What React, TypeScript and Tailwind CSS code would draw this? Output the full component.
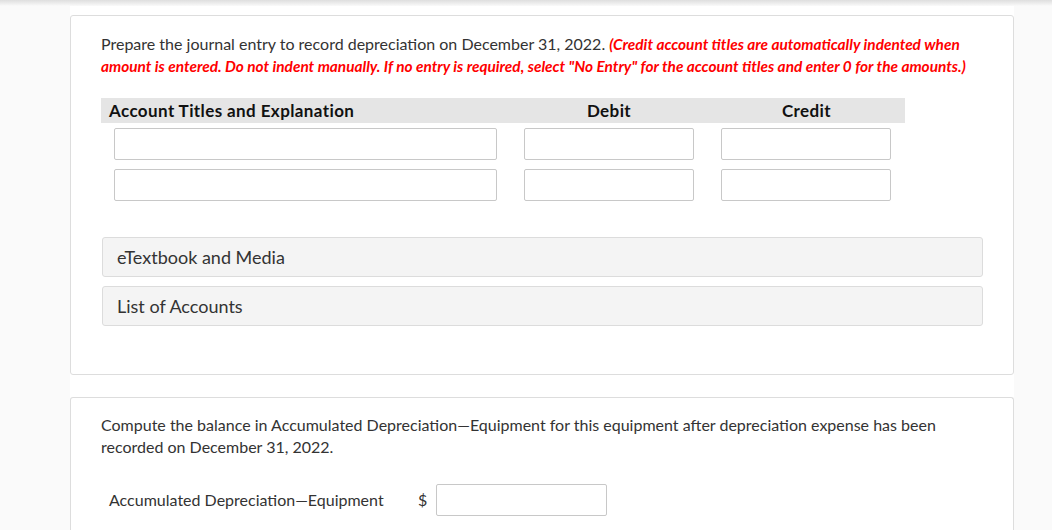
import React from "react";

const Field = ({ className = "" }: { className?: string }) => (
  <input
    type="text"
    className={`h-8 rounded-[2px] border border-[#c8c8c8] bg-white px-2 text-[15px] outline-none ${className}`}
  />
);

const Accordion = ({ label }: { label: string }) => (
  <div className="flex h-10 items-center rounded-[3px] border border-[#dcdcdc] bg-[#f4f4f4] px-[14px] text-[18px] text-[#333]">
    {label}
  </div>
);

const App: React.FC = () => {
  const rows = [0, 1];

  return (
    <div
      className="relative min-h-[530px] w-full bg-[#fafafa]"
      style={{ fontFamily: "Lato, 'Open Sans', sans-serif" }}
    >
      {/* top shadow strip */}
      <div className="absolute left-0 right-0 top-0 h-[6px] bg-gradient-to-b from-[#dedede] to-[#fafafa]" />

      <div className="ml-[70px] mr-[38px] flex flex-col gap-[22px] bg-white pt-[15px]">
        {/* Journal entry card */}
        <section className="h-[360px] rounded-[3px] border border-[#dddddd] bg-white px-[30px] pt-[17px]">
          <p className="text-[16px] leading-[22px] text-[#333]">
            Prepare the journal entry to record depreciation on December 31, 2022.{" "}
            <span className="text-[15.4px] font-bold italic text-[#ff0000]">
              (Credit account titles are automatically indented when amount is entered. Do not indent
              manually. If no entry is required, select "No Entry" for the account titles and enter 0 for
              the amounts.)
            </span>
          </p>

          <div className="mt-[21px] w-[804px]">
            <div className="grid h-[25px] grid-cols-[409px_198px_197px] items-center bg-[#e5e5e5] text-[17px] font-bold tracking-[0.4px] text-[#111]">
              <div className="pl-2">Account Titles and Explanation</div>
              <div className="text-center">Debit</div>
              <div className="text-center">Credit</div>
            </div>
            <div className="mt-[5px] flex flex-col gap-[9px]">
              {rows.map((r) => (
                <div key={r} className="grid grid-cols-[409px_198px_197px]">
                  <div className="px-[13px]">
                    <Field className="w-full" />
                  </div>
                  <div className="px-[14px]">
                    <Field className="w-full" />
                  </div>
                  <div className="pl-[13px] pr-[14px]">
                    <Field className="w-full" />
                  </div>
                </div>
              ))}
            </div>
          </div>

          <div className="ml-px mt-[36px] flex flex-col gap-[9px]">
            <Accordion label="eTextbook and Media" />
            <Accordion label="List of Accounts" />
          </div>
        </section>

        {/* Balance card */}
        <section className="h-[160px] rounded-t-[3px] border border-b-0 border-[#dddddd] bg-white px-[30px] pt-[16px]">
          <p className="text-[16px] leading-[22px] text-[#333]">
            Compute the balance in Accumulated Depreciation—Equipment for this equipment after depreciation
            expense has been recorded on December 31, 2022.
          </p>
          <div className="mt-[26px] flex items-center">
            <span className="ml-2 w-[309px] text-[16px] text-[#333]">Accumulated Depreciation—Equipment</span>
            <span className="w-[18px] text-[16px] text-[#333]">$</span>
            <Field className="w-[171px]" />
          </div>
        </section>
      </div>
    </div>
  );
};

export default App;
